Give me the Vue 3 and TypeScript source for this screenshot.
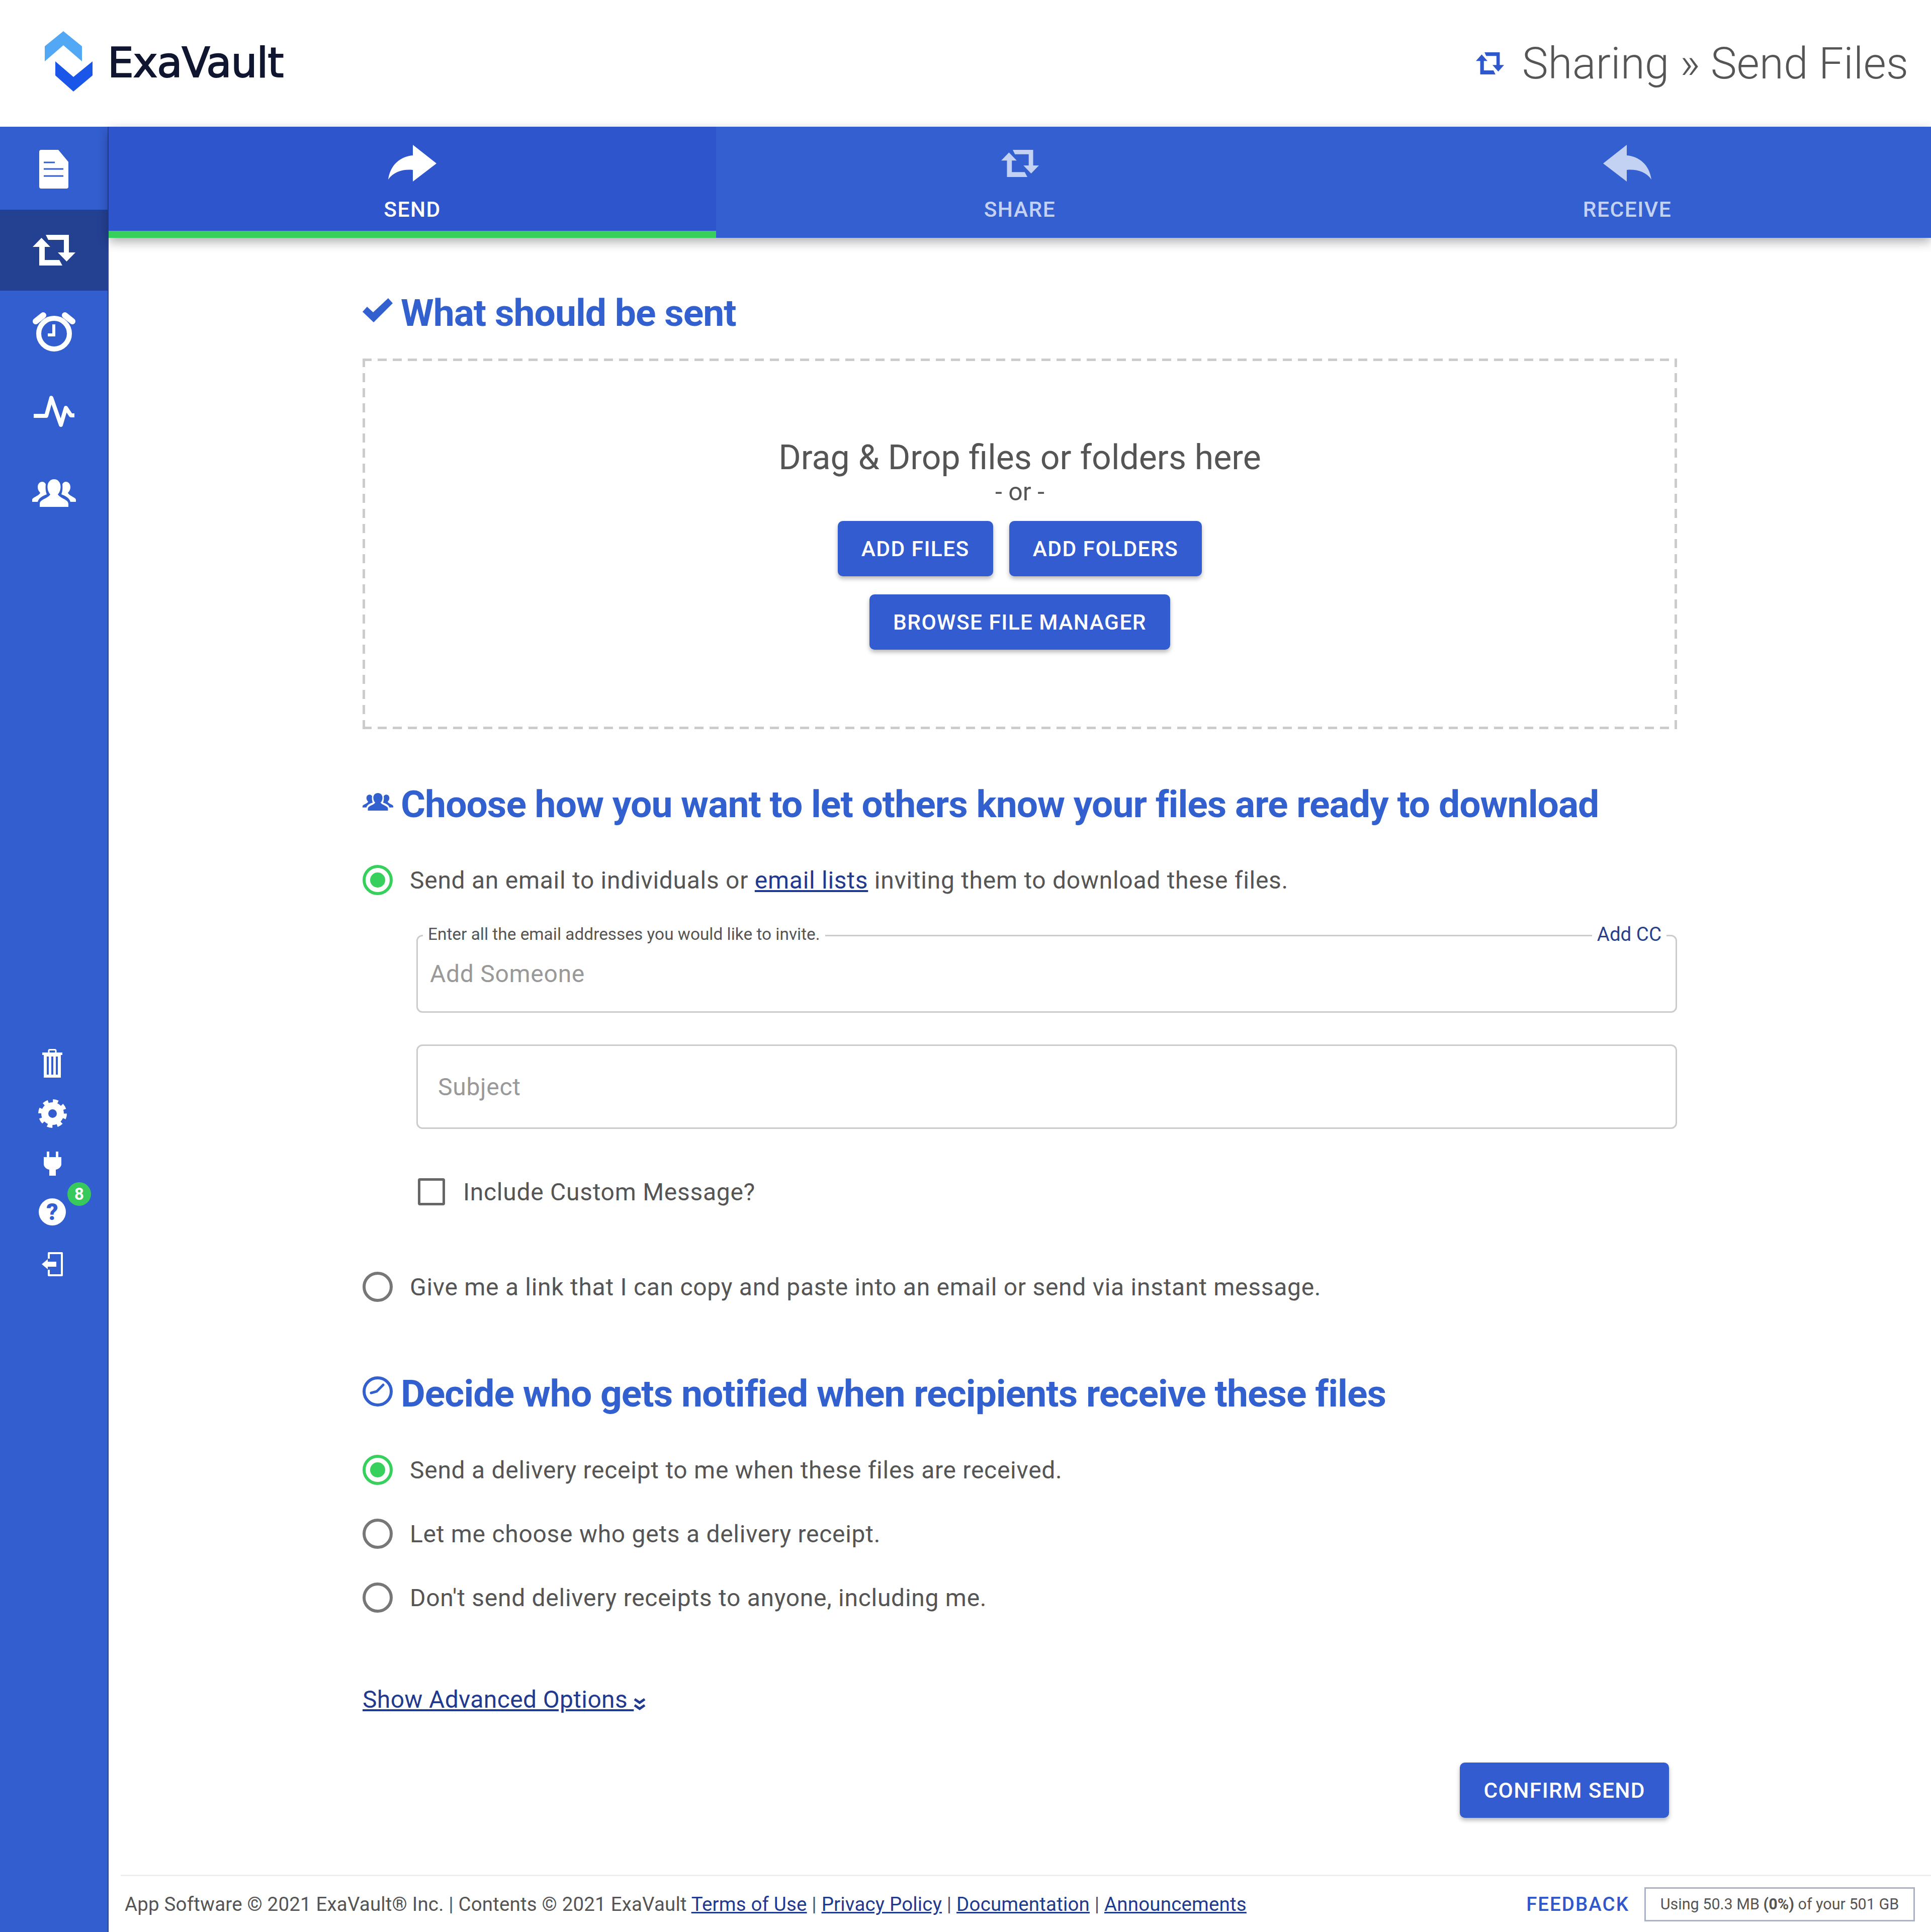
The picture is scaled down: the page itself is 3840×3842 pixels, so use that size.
<script setup lang="ts">
import { ref } from "vue";

type Tab = { label: string; icon: "send" | "share" | "receive"; active?: boolean };

const tabs = ref<Tab[]>([
  { label: "SEND", icon: "send", active: true },
  { label: "SHARE", icon: "share" },
  { label: "RECEIVE", icon: "receive" },
]);

const receipts = ref([
  { text: "Send a delivery receipt to me when these files are received.", on: true },
  { text: "Let me choose who gets a delivery receipt.", on: false },
  { text: "Don't send delivery receipts to anyone, including me.", on: false },
]);

const RETWEET = "M26 0H72V35H85L67.500 53L50 35H62V10H31ZM59 61H13V24H0L17.500 6L35 24H24V50H53Z";
const ARROW = "M47 0L0 37L47 73V50C65 48 85 53 96 69C92 40 72 23 47 21Z";
const GROUP =
  "M15 55V49C15 40 32 38 36 30C32 26 30.500 20 30.500 15C30.500 6 36 0 43.500 0S56.500 6 56.500 15C56.500 20 55 26 51 30C55 38 72 40 72 49V55ZM0 45V41C0 36 14 33 16 27C13 24 11 20 11 16C11 9 15 5 20 5C23 5 26 7 27 10C26 18 27 25 29 30C21 33 13 37 11 45ZM87 45V41C87 36 73 33 71 27C74 24 76 20 76 16C76 9 72 5 67 5C64 5 61 7 60 10C61 18 60 25 58 30C66 33 74 37 76 45Z";
</script>

<template>
  <div class="page">
    <header class="topbar">
      <div class="logo">
        <svg class="logo-mark" viewBox="89 62 95 120">
          <path fill="#52a8f5" d="M126 62L163 92V122L126 90L89 122V92Z" />
          <path fill="#1a56e8" d="M146 182L184 150V122L146 153L110 122V150Z" />
        </svg>
        <span class="logo-text">ExaVault</span>
      </div>
      <div class="page-title">
        <svg class="title-icon" viewBox="0 0 85 61" preserveAspectRatio="none"><path fill="#2f58cc" :d="RETWEET" /></svg>
        <span>Sharing » Send Files</span>
      </div>
    </header>

    <div class="body">
      <nav class="sidebar">
        <div class="nav-main">
          <a class="nav-item">
            <svg width="58" height="77" viewBox="0 0 58 77">
              <path fill="#fff" d="M4 0H38L58 24V73A4 4 0 0 1 54 77H4A4 4 0 0 1 0 73V4A4 4 0 0 1 4 0Z" />
              <path stroke="#335ecf" stroke-width="3" d="M9 25H31M9 38H48M9 52H48" />
            </svg>
          </a>
          <a class="nav-item active">
            <svg width="85" height="61" viewBox="0 0 85 61"><path fill="#fff" :d="RETWEET" /></svg>
          </a>
          <a class="nav-item">
            <svg width="87" height="81" viewBox="0 0 87 81">
              <circle cx="43.500" cy="45.500" r="30.500" fill="none" stroke="#fff" stroke-width="10" />
              <path stroke="#fff" stroke-width="12" stroke-linecap="round" d="M7 21L22 9M80 21L65 9" />
              <path fill="none" stroke="#fff" stroke-width="6" d="M43 27V48H31" />
            </svg>
          </a>
          <a class="nav-item">
            <svg class="pulse" width="81" height="66" viewBox="0 0 81 66">
              <path fill="none" stroke="#fff" stroke-width="8" stroke-linejoin="round" d="M0 42H25L35 6L54 60L64 26L74 41H81" />
            </svg>
          </a>
          <a class="nav-item">
            <svg width="87" height="55" viewBox="0 0 87 55"><path fill="#fff" :d="GROUP" /></svg>
          </a>
        </div>

        <div class="nav-lower">
          <a class="nav-small">
            <svg width="40" height="57" viewBox="0 0 40 57">
              <path fill="none" stroke="#fff" stroke-width="3" d="M13 8V3.500A2 2 0 0 1 15 1.500H25A2 2 0 0 1 27 3.500V8" />
              <path fill="#fff" d="M0 7H40V12H37V57H3V12H0ZM9 15V51H13V15ZM18 15V51H22V15ZM27 15V51H31V15Z" fill-rule="evenodd" />
            </svg>
          </a>
          <a class="nav-small">
            <svg width="57" height="57" viewBox="0 0 57 57">
              <circle cx="28.500" cy="28.500" r="15.500" fill="none" stroke="#fff" stroke-width="14" />
              <circle cx="28.500" cy="28.500" r="24.500" fill="none" stroke="#fff" stroke-width="8" stroke-dasharray="10 9.240" />
            </svg>
          </a>
          <a class="nav-small">
            <svg width="35" height="48" viewBox="0 0 35 48">
              <path fill="#fff" d="M6 0H11V11H24V0H29V11H35V25C35 31 29 35 24 36V48H11V36C6 35 0 31 0 25V11H6Z" />
            </svg>
          </a>
          <a class="nav-small help">
            <span class="help-circle">?</span>
            <span class="badge">8</span>
          </a>
          <a class="nav-small">
            <svg width="42" height="48" viewBox="0 0 42 48">
              <path fill="none" stroke="#fff" stroke-width="4" stroke-linejoin="round" d="M14 13V2H40V46H14V35" />
              <path fill="#fff" d="M0 24L12 14V19H29V29H12V34Z" />
            </svg>
          </a>
        </div>
      </nav>

      <main class="main">
        <div class="tabs">
          <div v-for="tab in tabs" :key="tab.label" class="tab" :class="{ on: tab.active }">
            <svg v-if="tab.icon === 'share'" class="tab-share" viewBox="0 0 85 61" preserveAspectRatio="none"><path fill="currentColor" :d="RETWEET" /></svg>
            <svg v-else class="tab-arrow" :class="{ flip: tab.icon === 'send' }" viewBox="0 0 96 74"><path fill="currentColor" :d="ARROW" /></svg>
            <span class="tab-label">{{ tab.label }}</span>
          </div>
        </div>

        <div class="content">
          <h3 class="heading first">
            <svg class="heading-icon check-icon" width="60" height="48" viewBox="0 0 60 48">
              <path fill="currentColor" d="M0 27L9 17L21 28L51 0L60 10L22 48Z" />
            </svg>
            What should be sent
          </h3>

          <div class="dropzone">
            <div class="drop-title">Drag &amp; Drop files or folders here</div>
            <div class="drop-or">- or -</div>
            <div class="drop-buttons">
              <button class="btn">ADD FILES</button>
              <button class="btn">ADD FOLDERS</button>
            </div>
            <button class="btn browse">BROWSE FILE MANAGER</button>
          </div>

          <h3 class="heading second">
            <svg class="heading-icon people-icon" width="61" height="35" viewBox="0 0 87 55" preserveAspectRatio="none"><path fill="currentColor" :d="GROUP" /></svg>
            Choose how you want to let others know your files are ready to download
          </h3>

          <label class="choice first-choice">
            <span class="radio on"></span>
            <span>Send an email to individuals or <a class="link">email lists</a> inviting them to download these files.</span>
          </label>

          <div class="recipients">
            <div class="field people">
              <span class="legend">Enter all the email addresses you would like to invite.</span>
              <a class="add-cc">Add CC</a>
              <span class="hint">Add Someone</span>
            </div>
            <div class="field subject">
              <span class="hint">Subject</span>
            </div>
            <label class="check-row">
              <span class="checkbox"></span>
              <span>Include Custom Message?</span>
            </label>
          </div>

          <label class="choice link-choice">
            <span class="radio"></span>
            <span>Give me a link that I can copy and paste into an email or send via instant message.</span>
          </label>

          <h3 class="heading third">
            <svg class="heading-icon" width="60" height="60" viewBox="0 0 60 60">
              <circle cx="30" cy="30" r="27" fill="none" stroke="currentColor" stroke-width="6" />
              <path fill="none" stroke="currentColor" stroke-width="5" stroke-linecap="round" d="M17 33L28 30L41 17" />
            </svg>
            Decide who gets notified when recipients receive these files
          </h3>

          <div class="receipts">
            <label v-for="r in receipts" :key="r.text" class="choice">
              <span class="radio" :class="{ on: r.on }"></span>
              <span>{{ r.text }}</span>
            </label>
          </div>

          <a class="advanced">
            <span class="advanced-text">Show Advanced Options </span>
            <svg width="24" height="26" viewBox="0 0 24 26">
              <path fill="none" stroke="#1f3a8f" stroke-width="5" d="M2 3L12 10L22 3M2 15L12 22L22 15" />
            </svg>
          </a>

          <div class="confirm-row">
            <button class="btn">CONFIRM SEND</button>
          </div>
        </div>

        <footer class="footer">
          <div class="legal">
            App Software © 2021 ExaVault® Inc. | Contents © 2021 ExaVault
            <a class="link">Terms of Use</a> | <a class="link">Privacy Policy</a> |
            <a class="link">Documentation</a> | <a class="link">Announcements</a>
          </div>
          <a class="feedback">FEEDBACK</a>
          <div class="usage">Using 50.3 MB <b>(0%)</b> of your 501 GB</div>
        </footer>
      </main>
    </div>
  </div>
</template>

<style>
html,
body {
  margin: 0;
  background: #fff;
}
</style>

<style scoped>
.page {
  width: 3840px;
  height: 3842px;
  display: flex;
  flex-direction: column;
  overflow: hidden;
  font-family: Roboto, "Liberation Sans", sans-serif;
  color: #555;
  background: #fff;
}

.topbar {
  height: 252px;
  flex: none;
  display: flex;
  align-items: center;
  justify-content: space-between;
  box-sizing: border-box;
  padding: 0 45px 0 89px;
}

.logo {
  display: flex;
  align-items: center;
  gap: 30px;
  margin-bottom: 8px;
}

.logo-mark {
  width: 95px;
  height: 120px;
}

.logo-text {
  margin-top: 4px;
  font-family: "DejaVu Sans", sans-serif;
  font-size: 82px;
  letter-spacing: -1px;
  color: #101530;
  -webkit-text-stroke: 2px #101530;
}

.page-title {
  display: flex;
  align-items: center;
  gap: 36px;
  font-size: 87.500px;
  font-weight: 300;
  color: #555;
}

.title-icon {
  width: 56px;
  height: 44px;
}

.body {
  flex: 1;
  display: flex;
  min-height: 0;
}

.sidebar {
  width: 216px;
  flex: none;
  box-sizing: border-box;
  padding-top: 4px;
  background: #335ecf;
  border-right: 2px solid #24449c;
}

.nav-item {
  height: 161px;
  display: flex;
  align-items: center;
  justify-content: center;
}

.nav-item.active {
  background: #244091;
}

.pulse {
  margin-bottom: 3px;
}

.nav-lower {
  margin-top: 1003px;
  padding-right: 6px;
}

.nav-small {
  position: relative;
  height: 100px;
  display: flex;
  align-items: center;
  justify-content: center;
}

.help-circle {
  width: 54px;
  height: 54px;
  margin-bottom: 8px;
  border-radius: 50%;
  background: #fff;
  color: #335ecf;
  font-size: 46px;
  font-weight: 900;
  line-height: 54px;
  text-align: center;
}

.badge {
  position: absolute;
  left: 134px;
  top: -13px;
  width: 47px;
  height: 47px;
  border-radius: 50%;
  background: #37c95c;
  color: #fff;
  font-size: 33px;
  font-weight: 700;
  line-height: 47px;
  text-align: center;
}

.main {
  flex: 1;
  min-width: 0;
  display: flex;
  flex-direction: column;
}

.tabs {
  height: 221px;
  flex: none;
  display: flex;
  background: #335fd0;
  box-shadow: 0 8px 20px rgba(0, 0, 0, 0.32);
}

.tab {
  flex: 1;
  display: flex;
  flex-direction: column;
  align-items: center;
  box-sizing: border-box;
  color: #c3d2f3;
  font-size: 42.500px;
  font-weight: 500;
  letter-spacing: 1.500px;
}

.tab.on {
  background: #2e55cc;
  color: #fff;
  border-bottom: 14px solid #37d05c;
}

.tab-arrow {
  width: 96px;
  height: 74px;
  margin-top: 36px;
}

.tab-arrow.flip {
  transform: scaleX(-1);
}

.tab-share {
  width: 75px;
  height: 54px;
  margin-top: 46px;
  margin-bottom: 10px;
}

.tab-label {
  margin-top: 30px;
}

.content {
  flex: 1;
  width: 2614px;
  margin: 0 auto;
}

.heading {
  position: relative;
  margin: 0;
  padding-left: 76px;
  font-size: 75px;
  line-height: 90px;
  font-weight: 700;
  letter-spacing: -0.970px;
  color: #3260ce;
}

.heading-icon {
  position: absolute;
  left: 0;
  top: 11px;
}

.check-icon {
  top: 16px;
}

.people-icon {
  top: 23px;
}

.heading.first {
  margin-top: 104px;
}

.heading.second {
  margin-top: 104px;
}

.heading.third {
  margin-top: 137px;
}

.dropzone {
  height: 737px;
  margin-top: 46px;
  box-sizing: border-box;
  padding-top: 155px;
  display: flex;
  flex-direction: column;
  align-items: center;
  background:
    repeating-linear-gradient(90deg, #ccc 0 18px, transparent 18px 30px) left top / 100% 5px no-repeat,
    repeating-linear-gradient(90deg, #ccc 0 18px, transparent 18px 30px) left bottom / 100% 5px no-repeat,
    repeating-linear-gradient(0deg, #ccc 0 18px, transparent 18px 30px) left top / 5px 100% no-repeat,
    repeating-linear-gradient(0deg, #ccc 0 18px, transparent 18px 30px) right top / 5px 100% no-repeat;
}

.drop-title {
  font-size: 68px;
  line-height: 84px;
}

.drop-or {
  font-size: 50px;
  line-height: 52px;
}

.drop-buttons {
  display: flex;
  gap: 32px;
  margin-top: 32px;
}

.btn {
  height: 110px;
  padding: 0 47px;
  border: none;
  border-radius: 10px;
  background: #335cd0;
  color: #fff;
  font-family: Roboto, sans-serif;
  font-size: 42.500px;
  font-weight: 500;
  letter-spacing: 1.400px;
  box-shadow: 0 5px 8px rgba(0, 0, 0, 0.28);
}

.browse {
  margin-top: 36px;
}

.choice {
  display: flex;
  align-items: center;
  gap: 34px;
  height: 60px;
  font-size: 48px;
  letter-spacing: 0.720px;
}

.first-choice {
  margin-top: 76px;
}

.link-choice {
  margin-top: 132px;
}

.radio {
  position: relative;
  width: 60px;
  height: 60px;
  flex: none;
  box-sizing: border-box;
  border: 6px solid #777;
  border-radius: 50%;
}

.radio.on {
  border-color: #37d05c;
}

.radio.on::after {
  content: "";
  position: absolute;
  left: 9px;
  top: 9px;
  width: 30px;
  height: 30px;
  border-radius: 50%;
  background: #37d05c;
}

.recipients {
  margin: 79px 0 0 107px;
}

.field {
  position: relative;
  box-sizing: border-box;
  display: flex;
  align-items: center;
  border: 3px solid #ccc;
  border-radius: 12px;
  background: #fff;
}

.people {
  height: 155px;
  padding-left: 24px;
}

.subject {
  height: 168px;
  margin-top: 63px;
  padding-left: 40px;
}

.hint {
  font-size: 48px;
  letter-spacing: 0.720px;
  color: #999;
}

.legend {
  position: absolute;
  left: 10px;
  top: -24px;
  padding: 0 10px;
  background: #fff;
  font-size: 33.400px;
  line-height: 40px;
  color: #555;
}

.add-cc {
  position: absolute;
  right: 18px;
  top: -27px;
  padding: 0 10px;
  background: #fff;
  font-size: 38.500px;
  line-height: 46px;
  color: #26408b;
}

.check-row {
  display: flex;
  align-items: center;
  gap: 36px;
  height: 54px;
  margin: 98px 0 0 3px;
  font-size: 48px;
  letter-spacing: 0.720px;
}

.checkbox {
  width: 54px;
  height: 54px;
  flex: none;
  box-sizing: border-box;
  border: 5px solid #666;
  border-radius: 4px;
}

.receipts {
  display: flex;
  flex-direction: column;
  gap: 67px;
  margin-top: 77px;
}

.link {
  color: #1f3a8f;
  text-decoration: underline;
}

.advanced {
  display: flex;
  align-items: flex-end;
  gap: 0;
  height: 60px;
  margin-top: 141px;
  font-size: 48px;
  letter-spacing: 0.350px;
  color: #1f3a8f;
}

.advanced-text {
  text-decoration: underline;
  white-space: pre;
}

.advanced svg {
  margin-bottom: 6px;
}

.confirm-row {
  display: flex;
  justify-content: flex-end;
  margin: 97px 16px 0 0;
}

.footer {
  height: 111px;
  margin-left: 24px;
  flex: none;
  display: flex;
  align-items: center;
  padding: 0 32px 0 8px;
  border-top: 3px solid #eee;
  font-size: 38.500px;
  letter-spacing: 0.170px;
}

.legal {
  flex: 1;
}

.feedback {
  margin-right: 30px;
  color: #2f58cc;
  font-weight: 500;
  letter-spacing: 2px;
}

.usage {
  box-sizing: border-box;
  width: 538px;
  height: 68px;
  border: 3px solid #aab2c4;
  font-size: 30.500px;
  letter-spacing: 0;
  line-height: 62px;
  text-align: center;
}

.usage b {
  font-weight: 700;
}
</style>
